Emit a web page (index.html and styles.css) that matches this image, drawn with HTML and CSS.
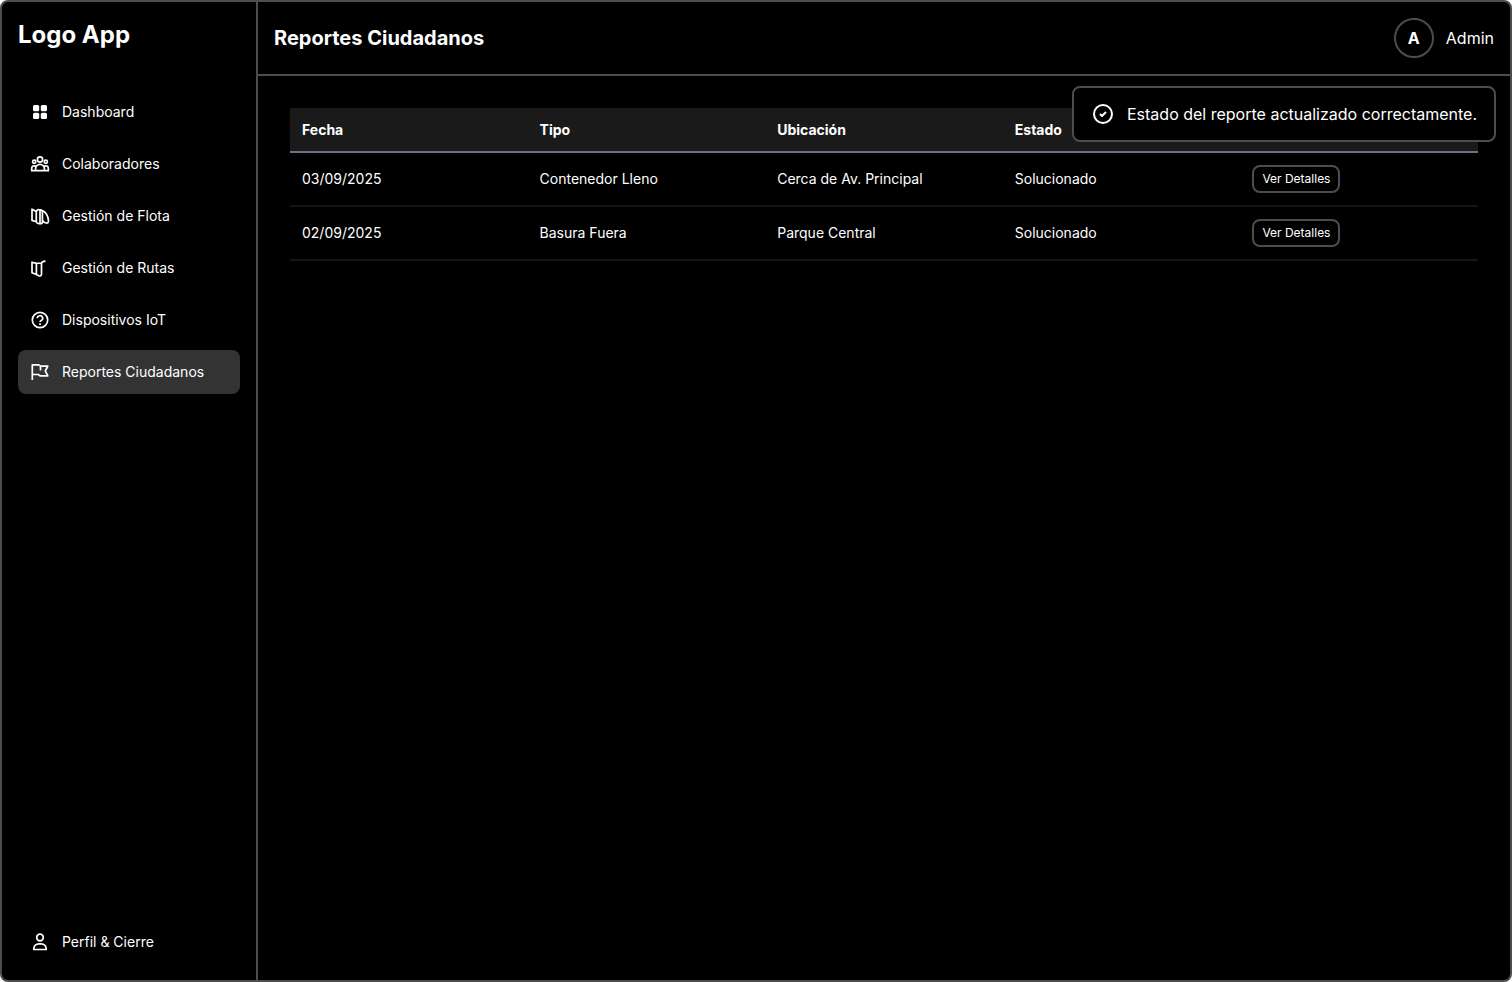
FILE: index.html
```html
<!DOCTYPE html>
<html lang="es">
<head>
<meta charset="utf-8">
<title>Reportes Ciudadanos</title>
<link rel="stylesheet" href="styles.css">
</head>
<body>
<div class="app">
  <aside class="sidebar">
    <div class="brand">Logo App</div>
    <nav class="nav">
      <a class="nav-item" href="#"><svg class="icon" viewBox="0 0 20 20"><g fill="currentColor" stroke="none"><rect x="3" y="3" width="6.2" height="6.2" rx="1.5"/><rect x="10.8" y="3" width="6.2" height="6.2" rx="1.5"/><rect x="3" y="10.8" width="6.2" height="6.2" rx="1.5"/><rect x="10.8" y="10.8" width="6.2" height="6.2" rx="1.5"/></g></svg>Dashboard</a>
      <a class="nav-item" href="#"><svg class="icon" viewBox="0 0 20 20"><circle cx="10" cy="5.5" r="2.6"/><circle cx="4.2" cy="7.8" r="1.6"/><circle cx="15.8" cy="7.8" r="1.6"/><path d="M5.6 16.7v-2a4.4 4.4 0 0 1 8.8 0v2zM5.6 16.7H1.7v-2.5a2.4 2.4 0 0 1 4-1.7M14.4 16.7h3.9v-2.5a2.4 2.4 0 0 0-4-1.7"/></svg>Colaboradores</a>
      <a class="nav-item" href="#"><svg class="icon" viewBox="0 0 20 20"><path d="M2 3.2v11.2l4.3 1.4V5.4zM6.3 5.4C7 3.7 8.4 3.2 10 4v13.4c-1.6.5-3 .2-3.7-1.6M10 4c1.4-.4 2.4.4 2.4 2v10.2c0 1.2-1 1.8-2.4 1.2M12 4.6c3.6.8 6.2 5.2 6.5 10.2 0 1.7-.8 2.4-2.3 2.2-2-.2-3-1.2-3.8-3"/></svg>Gestión de Flota</a>
      <a class="nav-item" href="#"><svg class="icon" viewBox="0 0 20 20"><path d="M2 4.2v10.5l4.4 1.8V5.4zM6.4 5.4l5.1-.4v11.3c0 1.4-1.4 2-2.8 1.5l-2.3-1.3M11.5 5c.5-1.2 2-1.7 4-1.9"/></svg>Gestión de Rutas</a>
      <a class="nav-item" href="#"><svg class="icon" viewBox="0 0 20 20"><circle cx="10" cy="10" r="7.7"/><path d="M7.3 8.3a2.7 2.5 0 1 1 4 2.1c-.9.5-1.3.8-1.3 1.5"/><path d="M10 13.3v1.7"/></svg>Dispositivos IoT</a>
      <a class="nav-item active" href="#" aria-current="page"><svg class="icon" viewBox="0 0 20 20"><path d="M2.3 18V2.8h6.4L10.5 4.2H17.8L15.3 9l2.5 4.8H10L8.3 12.5h-6M10.5 4.2v4.3"/></svg>Reportes Ciudadanos</a>
    </nav>
    <a class="nav-item" href="#"><svg class="icon" viewBox="0 0 20 20"><circle cx="10" cy="5.5" r="3.3"/><path d="M3.8 17.5v-1a5 5 0 0 1 5-4.7h2.4a5 5 0 0 1 5 4.7v1z"/></svg>Perfil &amp; Cierre</a>
  </aside>
  <div class="content">
    <header class="topbar">
      <h1 class="title">Reportes Ciudadanos</h1>
      <div class="user"><span class="avatar">A</span><span>Admin</span></div>
    </header>
    <main class="main">
      <table class="reports">
        <thead><tr><th>Fecha</th><th>Tipo</th><th>Ubicación</th><th>Estado</th><th></th></tr></thead>
        <tbody>
          <tr><td>03/09/2025</td><td>Contenedor Lleno</td><td>Cerca de Av. Principal</td><td>Solucionado</td><td><button class="details" type="button">Ver Detalles</button></td></tr>
          <tr><td>02/09/2025</td><td>Basura Fuera</td><td>Parque Central</td><td>Solucionado</td><td><button class="details" type="button">Ver Detalles</button></td></tr>
        </tbody>
      </table>
    </main>
    <div class="toast" role="status"><svg class="toast-icon" viewBox="0 0 24 24"><circle cx="12" cy="12" r="9"/><path d="m9 12 2 2 4-4"/></svg>Estado del reporte actualizado correctamente.</div>
  </div>
</div>
</body>
</html>
```
FILE: styles.css
```css
* {
  box-sizing: border-box;
}

body {
  margin: 0;
  background: #fff;
  color: #fff;
  font: 16px/24px Inter, sans-serif;
}

.app {
  display: flex;
  min-height: 100vh;
  background: #000;
  border: 2px solid #4d4d4d;
  border-radius: 8px;
}

.sidebar {
  display: flex;
  flex-direction: column;
  flex: none;
  width: 256px;
  padding: 16px;
  border-right: 2px solid #4d4d4d;
}

.brand {
  font-size: 24px;
  line-height: 34px;
  font-weight: 700;
}

.nav {
  display: flex;
  flex-direction: column;
  flex: 1;
  gap: 8px;
  padding-top: 38px;
}

.nav-item {
  display: flex;
  align-items: center;
  gap: 12px;
  height: 44px;
  padding: 0 12px;
  border-radius: 8px;
  color: #fff;
  font-size: 14px;
  line-height: 20px;
  text-decoration: none;
}

.active {
  background: #333;
}

.icon,
.toast-icon {
  flex: none;
  width: 20px;
  height: 20px;
  fill: none;
  stroke: currentColor;
  stroke-width: 1.7;
  stroke-linejoin: round;
}

.toast-icon {
  width: 24px;
  height: 24px;
  stroke-width: 2;
}

.content {
  position: relative;
  flex: 1;
  min-width: 0;
}

.topbar {
  display: flex;
  align-items: center;
  justify-content: space-between;
  padding: 16px;
  border-bottom: 2px solid #4d4d4d;
}

.title {
  margin: 0;
  font-size: 20px;
  line-height: 28px;
  font-weight: 700;
}

.user {
  display: flex;
  align-items: center;
  gap: 12px;
}

.avatar {
  display: grid;
  place-items: center;
  width: 40px;
  height: 40px;
  border: 2px solid #4d4d4d;
  border-radius: 50%;
  font-weight: 700;
}

.main {
  padding: 32px;
}

.reports {
  width: 100%;
  table-layout: fixed;
  border-spacing: 0;
  font-size: 14px;
  line-height: 20px;
  text-align: left;
}

.reports th {
  padding: 12px 12px 11px;
  background: #1a1a1a;
  border-bottom: 2px solid #6b7280;
  font-weight: 700;
}

.reports td {
  padding: 12px;
  border-bottom: 2px solid #11151c;
}

.details {
  display: block;
  height: 28px;
  padding: 0 8px;
  border: 2px solid #4d4d4d;
  border-radius: 8px;
  background: #000;
  color: #fff;
  font: 12px/16px Inter, sans-serif;
}

.toast {
  position: absolute;
  top: 84px;
  right: 14px;
  display: flex;
  align-items: center;
  gap: 12px;
  padding: 14px 17px;
  border: 2px solid #4d4d4d;
  border-radius: 8px;
  background: #000;
}
```
